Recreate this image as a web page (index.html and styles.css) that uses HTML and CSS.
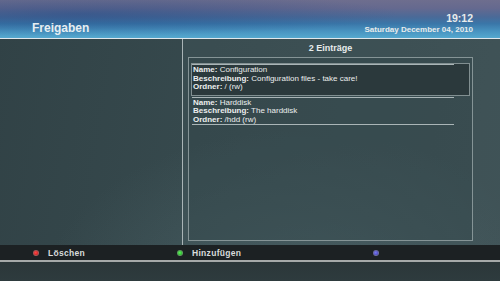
FILE: index.html
```html
<!DOCTYPE html>
<html lang="de">
<head>
<meta charset="utf-8">
<title>Freigaben</title>
<link rel="stylesheet" href="styles.css">
</head>
<body>
<div class="screen">
  <header class="header">
    <div class="title">Freigaben</div>
    <div class="clock">
      <div class="time">19:12</div>
      <div class="date">Saturday December 04, 2010</div>
    </div>
  </header>
  <main class="main">
    <div class="left-pane"></div>
    <div class="divider"></div>
    <div class="right-pane">
      <div class="count">2 Einträge</div>
      <div class="box">
        <div class="list">
          <div class="entry selected">
            <div class="sep"></div>
            <div class="txt">
              <div><b>Name:</b> Configuration</div>
              <div><b>Beschreibung:</b> Configuration files - take care!</div>
              <div><b>Ordner:</b> / (rw)</div>
            </div>
          </div>
          <div class="entry">
            <div class="sep"></div>
            <div class="txt">
              <div><b>Name:</b> Harddisk</div>
              <div><b>Beschreibung:</b> The harddisk</div>
              <div><b>Ordner:</b> /hdd (rw)</div>
            </div>
            <div class="sep last"></div>
          </div>
        </div>
      </div>
    </div>
  </main>
  <footer class="footer">
    <div class="keys">
      <div class="key"><span class="dot red"></span><span class="label">Löschen</span></div>
      <div class="key"><span class="dot green"></span><span class="label">Hinzufügen</span></div>
      <div class="key"><span class="dot blue"></span></div>
    </div>
    <div class="footer-line"></div>
    <div class="footer-bottom"></div>
  </footer>
</div>
</body>
</html>
```
FILE: styles.css
```css
* { box-sizing: border-box; }
html, body {
  margin: 0;
  padding: 0;
  width: 500px;
  height: 281px;
  overflow: hidden;
  font-family: "Liberation Sans", Arial, sans-serif;
  color: #e8ecec;
}
.screen {
  width: 500px;
  height: 281px;
  display: flex;
  flex-direction: column;
  background:
    radial-gradient(ellipse 260px 170px at 300px 300px, rgba(90,115,120,0.45), rgba(90,115,120,0) 100%),
    linear-gradient(100deg, #314246 0%, #36494d 40%, #3d5054 100%);
}
.header {
  height: 39px;
  flex: none;
  display: flex;
  justify-content: space-between;
  align-items: flex-end;
  padding: 0 27px 4px 32px;
  border-bottom: 1px solid #dfe7ec;
  background:
    radial-gradient(ellipse 320px 22px at 80px 14px, rgba(30,70,130,0.45), rgba(30,70,130,0)),
    linear-gradient(180deg, #6e6e8e 0%, #65698f 22%, #4a6a98 45%, #3a76a8 62%, #4893c0 82%, #55a9cf 100%);
}
.title {
  font-size: 12px;
  font-weight: bold;
  color: #e6eef2;
  line-height: 12px;
}
.clock {
  text-align: right;
}
.time {
  font-size: 10.5px;
  font-weight: bold;
  line-height: 10px;
  margin-bottom: 3px;
}
.date {
  font-size: 8px;
  font-weight: bold;
  line-height: 8px;
}
.main {
  height: 206px;
  flex: none;
  display: flex;
}
.left-pane {
  width: 182px;
  flex: none;
}
.divider {
  width: 1px;
  flex: none;
  background: #a9b4b6;
}
.right-pane {
  flex: 1;
  padding-left: 5px;
  background: rgba(70,90,95,0.25);
}
.count {
  width: 285px;
  height: 18px;
  line-height: 18px;
  text-align: center;
  font-size: 9px;
  font-weight: bold;
}
.box {
  width: 285px;
  height: 184px;
  border: 1px solid #859496;
  background: rgba(40,58,62,0.25);
}
.list {
  padding: 5px 2px 0 2px;
}
.entry {
  width: 279px;
  border: 1px solid transparent;
  padding-bottom: 3px;
}
.entry.selected {
  border-color: #818f91;
  background: #2b393c;
}
.sep {
  width: 262px;
  height: 1px;
  background: #aab5b7;
}
.txt {
  padding: 1px 0 0 1px;
  font-size: 8px;
  line-height: 8.5px;
  color: #eceeee;
}
.txt b {
  font-weight: bold;
}
.footer {
  flex: 1;
  display: flex;
  flex-direction: column;
}
.keys {
  height: 15px;
  flex: none;
  background: #1c2123;
  display: grid;
  grid-template-columns: 144px 196px auto;
  padding-left: 33px;
  align-items: center;
}
.key {
  display: flex;
  align-items: center;
}
.dot {
  width: 6px;
  height: 6px;
  border-radius: 50%;
  flex: none;
  margin-right: 9px;
  border: 1px solid rgba(120,120,120,0.6);
}
.dot.red { background: radial-gradient(circle at 40% 40%, #ff4a4a, #d01010); }
.dot.green { background: radial-gradient(circle at 40% 40%, #5cf05c, #18b818); }
.dot.blue { background: radial-gradient(circle at 40% 40%, #7a7af0, #3a3ac0); }
.label {
  font-size: 8.5px;
  font-weight: bold;
  letter-spacing: 0.3px;
  color: #d8dcdc;
  line-height: 15px;
  padding-top: 1px;
}
.footer-line {
  height: 2px;
  flex: none;
  background: #a6aaa9;
}
.footer-bottom {
  flex: 1;
  background: linear-gradient(180deg, #2b3739 0%, #2e3b3e 100%);
}
```
